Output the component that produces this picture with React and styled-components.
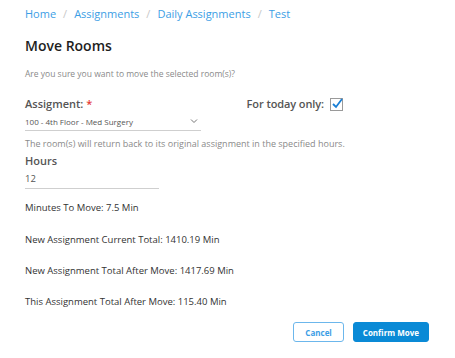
import React from 'react';
import styled, { createGlobalStyle } from 'styled-components';

const GlobalStyle = createGlobalStyle`
	body {
		margin: 0;
		background: #ffffff;
		font-family: 'Open Sans', 'Liberation Sans', sans-serif;
	}
`;

const Page = styled.div`
	width: 455px;
	height: 358px;
	padding: 0 25px;
	box-sizing: border-box;
	display: flex;
	flex-direction: column;
`;

const Crumbs = styled.nav`
	display: flex;
	align-items: center;
	gap: 7px;
	height: 26px;
	font-size: 11px;
	color: #3c9ee5;
`;

const Sep = styled.span`
	color: #c8c8c8;
`;

const Title = styled.h1`
	margin: 10px 0 0;
	font-size: 14px;
	font-weight: 600;
	color: #1e1e1e;
	line-height: 20px;
`;

const Muted = styled.p`
	margin: ${(p) => p.$top || 0}px 0 0;
	font-size: ${(p) => p.$size || 8.5}px;
	line-height: 12px;
	color: #8a8a8a;
`;

const FormRow = styled.div`
	display: flex;
	justify-content: space-between;
	align-items: flex-start;
	margin-top: 16px;
	width: 318px;
`;

const Field = styled.div`
	display: flex;
	flex-direction: column;
	width: ${(p) => p.$width}px;
`;

const Label = styled.label`
	font-size: 11px;
	font-weight: 600;
	color: #555555;
	line-height: 16px;
	margin-top: ${(p) => p.$top || 0}px;
`;

const Req = styled.span`
	color: #e53935;
	margin-left: 3px;
`;

const Input = styled.div`
	display: flex;
	align-items: center;
	justify-content: space-between;
	border-bottom: 1px solid #cfcfcf;
	height: ${(p) => p.$height || 18}px;
	font-size: ${(p) => p.$size || 8}px;
	color: #555555;
	padding-right: 3px;
`;

const Check = styled.span`
	display: inline-flex;
	align-items: center;
	gap: 6px;
	font-size: 11px;
	font-weight: 600;
	color: #555555;
	line-height: 16px;
	letter-spacing: -0.1px;
`;

const Box = styled.span`
	width: 11px;
	height: 11px;
	border: 1px solid #9a9a9a;
	position: relative;
	display: inline-block;
`;

const Stat = styled.p`
	margin: ${(p) => p.$top}px 0 0;
	font-size: 9.5px;
	line-height: 13px;
	color: #333333;
`;

const Actions = styled.div`
	display: flex;
	justify-content: flex-end;
	gap: 9px;
	margin-top: 14px;
	padding-right: 1px;
`;

const Button = styled.button`
	height: 20px;
	padding: 0 ${(p) => (p.$primary ? 9 : 11)}px;
	border-radius: 3px;
	font-family: inherit;
	font-size: 8px;
	font-weight: 700;
	border: 1px solid ${(p) => (p.$primary ? '#0a8ad6' : '#6cb7ec')};
	background: ${(p) => (p.$primary ? '#0a8ad6' : '#ffffff')};
	color: ${(p) => (p.$primary ? '#ffffff' : '#3c9ee5')};
`;

export default function App() {
	return (
		<Page>
			<GlobalStyle />
			<Crumbs>
				<span>Home</span>
				<Sep>/</Sep>
				<span>Assignments</span>
				<Sep>/</Sep>
				<span>Daily Assignments</span>
				<Sep>/</Sep>
				<span>Test</span>
			</Crumbs>
			<Title>Move Rooms</Title>
			<Muted $top={12}>Are you sure you want to move the selected room(s)?</Muted>
			<FormRow>
				<Field $width={176}>
					<Label>
						Assigment:<Req>*</Req>
					</Label>
					<Input>
						<span>100 - 4th Floor - Med Surgery</span>
						<svg width="8" height="6" viewBox="0 0 8 6">
							<path d="M1 1.5 L4 4.5 L7 1.5" fill="none" stroke="#777" strokeWidth="1" />
						</svg>
					</Input>
				</Field>
				<Check>
					For today only:
					<Box>
						<svg width="13" height="13" viewBox="0 0 13 13" style={{ position: 'absolute', left: 0, top: -2 }}>
							<path d="M2 7 L5 10 L11 2" fill="none" stroke="#1a7fd6" strokeWidth="1.8" />
						</svg>
					</Box>
				</Check>
			</FormRow>
			<Muted $top={7} $size={9}>
				The room(s) will return back to its original assignment in the specified hours.
			</Muted>
			<Field $width={134}>
				<Label $top={3}>Hours</Label>
				<Input $size={9.5} $height={19}>12</Input>
			</Field>
			<Stat $top={12}>Minutes To Move: 7.5 Min</Stat>
			<Stat $top={19}>New Assignment Current Total: 1410.19 Min</Stat>
			<Stat $top={18}>New Assignment Total After Move: 1417.69 Min</Stat>
			<Stat $top={18}>This Assignment Total After Move: 115.40 Min</Stat>
			<Actions>
				<Button>Cancel</Button>
				<Button $primary>Confirm Move</Button>
			</Actions>
		</Page>
	);
}
